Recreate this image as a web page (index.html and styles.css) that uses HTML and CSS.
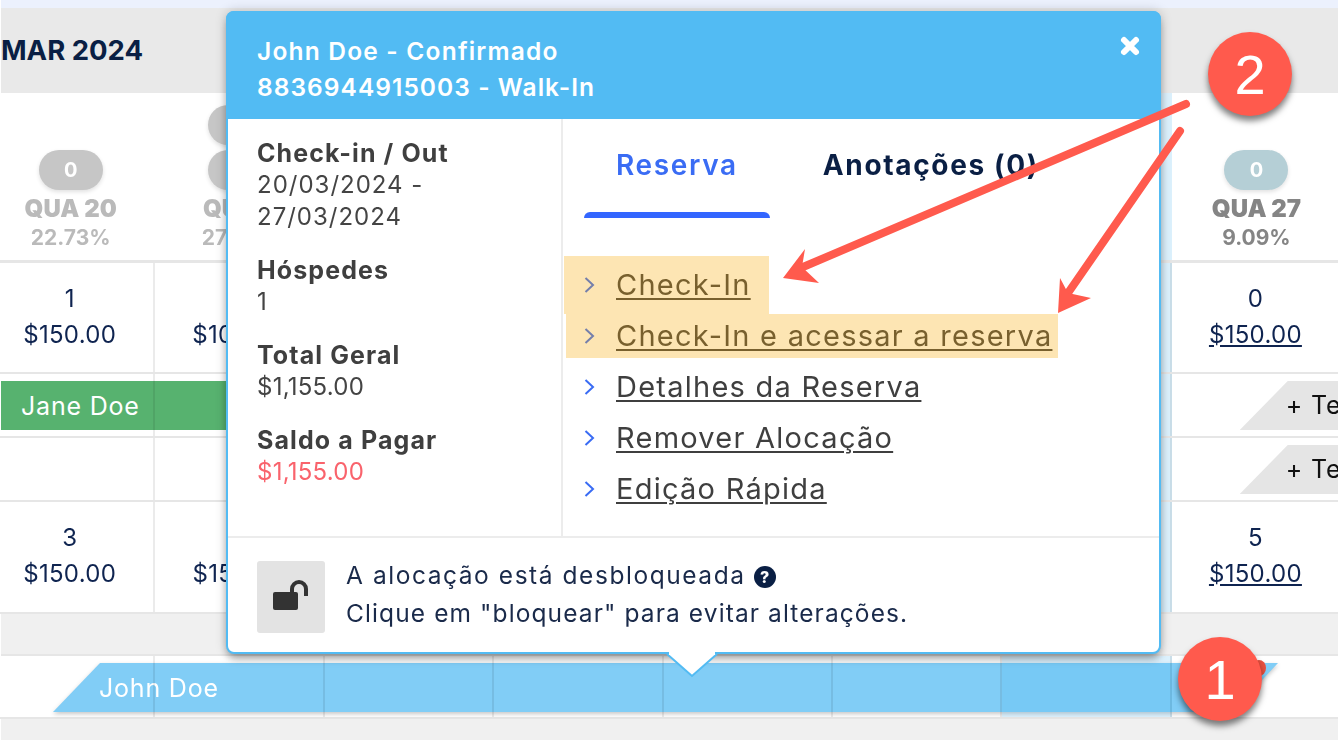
FILE: index.html
```html
<!DOCTYPE html>
<html lang="pt">
<head>
<meta charset="utf-8">
<title>Calendário de reservas</title>
<link rel="stylesheet" href="styles.css">
</head>
<body>
<div class="page">
  <div class="topstrip"></div>
  <header class="month"><h1>MAR 2024</h1></header>

  <div class="grid head">
    <div class="day"><span class="pill">0</span><b>QUA 20</b><i>22.73%</i></div>
    <div class="day"><span class="pill extra">0</span><span class="pill">0</span><b>QUI 21</b><i>27.27%</i></div>
    <div class="day"></div><div class="day"></div><div class="day"></div><div class="day"></div>
    <div class="day today"></div>
    <div class="day last"><span class="pill">0</span><b>QUA 27</b><i>9.09%</i></div>
  </div>

  <div class="grid row tall">
    <div class="cell">1<br>$150.00</div>
    <div class="cell">1<br>$100.00</div>
    <div class="cell"></div><div class="cell"></div><div class="cell"></div><div class="cell"></div>
    <div class="cell today"></div>
    <div class="cell"><span>0</span><br><a href="#">$150.00</a></div>
  </div>

  <div class="grid row short">
    <div class="bar green">Jane Doe</div>
    <div class="cell"></div><div class="cell"></div><div class="cell"></div><div class="cell"></div>
    <div class="cell"></div><div class="cell"></div><div class="cell today"></div>
    <div class="cell"><span class="tentative">+ Teste</span></div>
  </div>

  <div class="grid row short">
    <div class="cell"></div><div class="cell"></div><div class="cell"></div><div class="cell"></div>
    <div class="cell"></div><div class="cell"></div><div class="cell today"></div>
    <div class="cell"><span class="tentative">+ Teste</span></div>
  </div>

  <div class="grid row tall wide">
    <div class="cell">3<br>$150.00</div>
    <div class="cell">3<br>$150.00</div>
    <div class="cell"></div><div class="cell"></div><div class="cell"></div><div class="cell"></div>
    <div class="cell today"></div>
    <div class="cell"><span>5</span><br><a href="#">$150.00</a></div>
  </div>

  <div class="spacer"></div>

  <div class="grid row last-row">
    <div class="barshadow"><div class="bar blue">John Doe</div></div>
    <div class="cell"></div><div class="cell"></div><div class="cell"></div><div class="cell"></div>
    <div class="cell"></div><div class="cell"></div><div class="cell today"></div>
    <div class="cell"></div>
  </div>

  <div class="rest"></div>

  <section class="popup">
    <div class="pop-head">
      <span class="l1">John Doe - Confirmado</span><br><span class="l2">8836944915003 - Walk-In</span>
      <svg class="close" width="22" height="22" viewBox="0 0 22 22"><path d="M5 5 17 17M17 5 5 17" stroke="#fff" stroke-width="6" stroke-linecap="round"/></svg>
    </div>
    <div class="pop-body">
      <div class="summary">
        <dl>
          <dt>Check-in / Out</dt><dd class="dates">20/03/2024 -<br>27/03/2024</dd>
          <dt>Hóspedes</dt><dd>1</dd>
          <dt>Total Geral</dt><dd>$1,155.00</dd>
          <dt>Saldo a Pagar</dt><dd class="due">$1,155.00</dd>
        </dl>
      </div>
      <div class="details">
        <nav class="tabs">
          <span class="tab active">Reserva</span>
          <span class="tab">Anotações (0)</span>
        </nav>
        <ul class="actions">
          <li><svg width="11" height="18" viewBox="0 0 11 18"><path d="M1.5 2 9 9 1.5 16" fill="none" stroke="#3a6cf4" stroke-width="2"/></svg><a href="#">Check-In</a></li>
          <li><svg width="11" height="18" viewBox="0 0 11 18"><path d="M1.5 2 9 9 1.5 16" fill="none" stroke="#3a6cf4" stroke-width="2"/></svg><a href="#">Check-In e acessar a reserva</a></li>
          <li><svg width="11" height="18" viewBox="0 0 11 18"><path d="M1.5 2 9 9 1.5 16" fill="none" stroke="#3a6cf4" stroke-width="2"/></svg><a href="#">Detalhes da Reserva</a></li>
          <li><svg width="11" height="18" viewBox="0 0 11 18"><path d="M1.5 2 9 9 1.5 16" fill="none" stroke="#3a6cf4" stroke-width="2"/></svg><a href="#">Remover Alocação</a></li>
          <li><svg width="11" height="18" viewBox="0 0 11 18"><path d="M1.5 2 9 9 1.5 16" fill="none" stroke="#3a6cf4" stroke-width="2"/></svg><a href="#">Edição Rápida</a></li>
        </ul>
        <div class="mark mark-a"></div>
        <div class="mark mark-b"></div>
      </div>
    </div>
    <div class="pop-foot">
      <div class="lockbox">
        <svg width="68" height="72" viewBox="0 0 68 72"><rect x="16" y="31" width="25" height="18" rx="2" fill="#333"/><path d="M35 31V28A7 7 0 0 1 49 28V35" fill="none" stroke="#333" stroke-width="4"/></svg>
      </div>
      <p><span class="first">A alocação está desbloqueada</span> <span class="help">?</span><br>Clique em "bloquear" para evitar alterações.</p>
    </div>
    <svg class="tip" width="54" height="28" viewBox="0 0 54 28"><path d="M2 3 27 25 52 3" fill="#fff" stroke="#52bbf3" stroke-width="2"/><path d="M4 0H50V4H4Z" fill="#fff"/></svg>
  </section>

  <div class="dot"></div>
  <svg class="arrows" width="1338" height="740" viewBox="0 0 1338 740">
    <path d="M1186 104 803 267" stroke="#ff5a4d" stroke-width="8" stroke-linecap="round" fill="none"/>
    <path d="M783 278 805 249 802 267 819 283Z" fill="#ff5a4d"/>
    <path d="M1180 131 1068 293" stroke="#ff5a4d" stroke-width="8" stroke-linecap="round" fill="none"/>
    <path d="M1058 313 1060 278 1068 293 1091 298Z" fill="#ff5a4d"/>
  </svg>
  <div class="badge badge-two">2</div>
  <div class="badge badge-one">1</div>
</div>
</body>
</html>
```
FILE: styles.css
```css
* { box-sizing: border-box; }
html, body { margin: 0; padding: 0; background: #fff; }
.page {
  position: relative;
  width: 1338px;
  height: 740px;
  overflow: hidden;
  padding-left: 1px;
  font-family: "Inter", "Liberation Sans", sans-serif;
  color: #0f2450;
  filter: blur(.35px);
}
.topstrip { height: 8px; background: #ecf1fd; }
.month { height: 85px; background: #e9e9e9; display: flex; align-items: center; padding-bottom: 2px; }
.month h1 { margin: 0; font-size: 27.5px; font-weight: 700; color: #0a1f44; letter-spacing: 0; }

.grid {
  display: grid;
  grid-template-columns: repeat(8, 169.4px);
  margin-left: -15px;
  position: relative;
}
.head { height: 170px; border-bottom: 3px solid #e6e6e6; background: #fff; }
.day {
  position: relative;
  display: flex;
  flex-direction: column;
  align-items: center;
  padding-top: 57px;
  font-weight: 700;
  color: #bababa;
}
.day b { font-size: 24px; line-height: 30px; margin-top: 4px; }
.day i { font-style: normal; font-size: 21px; line-height: 28px; }
.pill {
  width: 64px; height: 40px; border-radius: 20px;
  background: #c6c6c6; color: #fff;
  display: flex; align-items: center; justify-content: center;
  font-size: 20px; font-weight: 700;
  box-shadow: 0 2px 4px rgba(0,0,0,.12);
  flex: none;
}
.pill.extra { position: absolute; top: 12px; }
.last { color: #858585; }
.last .pill { background: #b5cfd6; }
.today { background: rgba(82,187,243,.2); }

.row { border-bottom: 2px solid #e6e6e6; background: #fff; height: 64px; }
.tall { height: 111px; }
.wide { height: 112px; }
.last-row { height: 63px; }
.cell {
  position: relative;
  z-index: 1;
  border-right: 2px solid rgba(0,0,0,.08);
  text-align: center;
  font-size: 24px;
  letter-spacing: .3px;
  line-height: 36px;
  padding-top: 18px;
  overflow: hidden;
}
.cell a { color: #0f2450; text-decoration: underline; }

.bar {
  position: absolute;
  height: 49px;
  display: flex;
  align-items: center;
  font-size: 25px;
  letter-spacing: .8px;
  color: #fff;
}
.green { left: 15px; top: 7px; width: 700px; background: #57b26f; padding-left: 20px; }
.barshadow {
  position: absolute; left: 0; top: 0; width: 100%; height: 100%;
  filter: drop-shadow(0 2px 2px rgba(0,0,0,.22));
}
.blue {
  left: 67px; top: 7px; width: 1225px;
  background: #81cdf6;
  padding-left: 46px;
  clip-path: polygon(47px 0, 100% 0, 1179px 100%, 0 100%);
}
.tentative {
  position: absolute;
  left: 68px;
  top: 7px;
  width: 110px;
  height: 49px;
  background: #e5e5e5;
  color: #111;
  text-align: left;
  padding-left: 46px;
  line-height: 49px;
  font-size: 25px;
  letter-spacing: .8px;
  white-space: nowrap;
  clip-path: polygon(48px 0, 100% 0, 100% 100%, 0 100%);
}
.spacer { height: 42px; background: #f0f0f0; border-bottom: 2px solid #e6e6e6; }
.rest { height: 22px; background: #f0f0f0; }

.popup {
  position: absolute;
  left: 226px; top: 11px;
  width: 935px; height: 643px;
  background: #fff;
  border: 2px solid #52bbf3;
  border-radius: 8px;
  box-shadow: 0 6px 8px -2px rgba(0,0,0,.35), 0 0 12px rgba(0,0,0,.2);
  z-index: 5;
  display: flex;
  flex-direction: column;
}
.pop-head {
  position: relative;
  height: 108px;
  flex: none;
  margin: -2px -2px 0;
  background: #52bbf3;
  border-radius: 8px 8px 0 0;
  padding: 23px 0 0 31px;
  color: #fff;
  font-size: 24.5px;
  font-weight: 600;
  line-height: 35.5px;
}
.l1 { letter-spacing: 1.2px; }
.l2 { letter-spacing: 1.05px; }
.close { position: absolute; right: 20px; top: 24px; }
.pop-body { height: 417px; flex: none; display: flex; }
.summary { width: 335px; flex: none; border-right: 2px solid #ececec; padding: 18px 0 0 29px; }
dl { margin: 0; font-size: 24px; line-height: 32px; color: #444; }
dt { font-size: 25px; font-weight: 700; color: #3f3f3f; letter-spacing: 1.1px; }
dd { margin: 0 0 21px; letter-spacing: .25px; }
.dates { letter-spacing: 1px; }
.due { color: #f9636c; }
.details { position: relative; flex: 1; }
.tabs { display: flex; gap: 21px; padding-left: 21px; }
.tab {
  position: relative;
  padding: 30px 32px 37px;
  font-size: 28px;
  letter-spacing: 1.65px;
  line-height: 32px;
  font-weight: 700;
  color: #0a1f44;
}
.tab.active { color: #3a6cf4; font-weight: 600; }
.tab.active::after {
  content: "";
  position: absolute;
  left: 0; right: 0; bottom: 0;
  height: 6px;
  background: #3366ff;
  border-radius: 6px 6px 0 0;
}
.actions { list-style: none; margin: 41px 0 0; padding: 0 0 0 21px; }
.actions li { height: 51px; display: flex; align-items: center; gap: 21px; font-size: 29px; }
.actions a { color: #3f3f3f; text-decoration: underline; text-decoration-thickness: 2px; text-underline-offset: 3px; letter-spacing: 1.25px; }
.mark { position: absolute; background: rgba(250,170,10,.31); }
.mark-a { left: 1px; top: 137px; width: 205px; height: 58px; }
.mark-b { left: 3px; top: 195px; width: 492px; height: 44px; }
.pop-foot {
  flex: 1;
  display: flex;
  gap: 21px;
  align-items: flex-start;
  border-top: 2px solid #ececec;
  padding: 23px 0 0 29px;
}
.lockbox { width: 68px; height: 72px; background: #e3e3e3; border-radius: 3px; flex: none; }
.pop-foot p { margin: -5px 0 0; font-size: 24.5px; line-height: 38px; color: #1a2a4a; letter-spacing: 1.1px; }
.first { letter-spacing: 1.55px; }
.help {
  display: inline-flex; align-items: center; justify-content: center;
  width: 22px; height: 22px; border-radius: 50%;
  background: #0a1f44; color: #fff;
  font-size: 16px; font-weight: 800; letter-spacing: 0;
  vertical-align: 1px;
}
.tip { position: absolute; left: 437px; top: 638px; }

.arrows { position: absolute; left: 0; top: 0; z-index: 6; }
.dot { position: absolute; left: 1252px; top: 660px; width: 14px; height: 16px; border-radius: 50%; background: #e8503f; z-index: 6; }
.badge {
  position: absolute;
  z-index: 7;
  width: 84px; height: 84px;
  border-radius: 50%;
  background: #ff5a4d;
  color: #fff;
  display: flex; align-items: center; justify-content: center;
  font-family: "Liberation Sans", sans-serif;
  font-size: 56px;
  box-shadow: 0 5px 6px rgba(0,0,0,.5);
}
.badge-two { left: 1208px; top: 32px; }
.badge-one { left: 1178px; top: 637px; }
```
